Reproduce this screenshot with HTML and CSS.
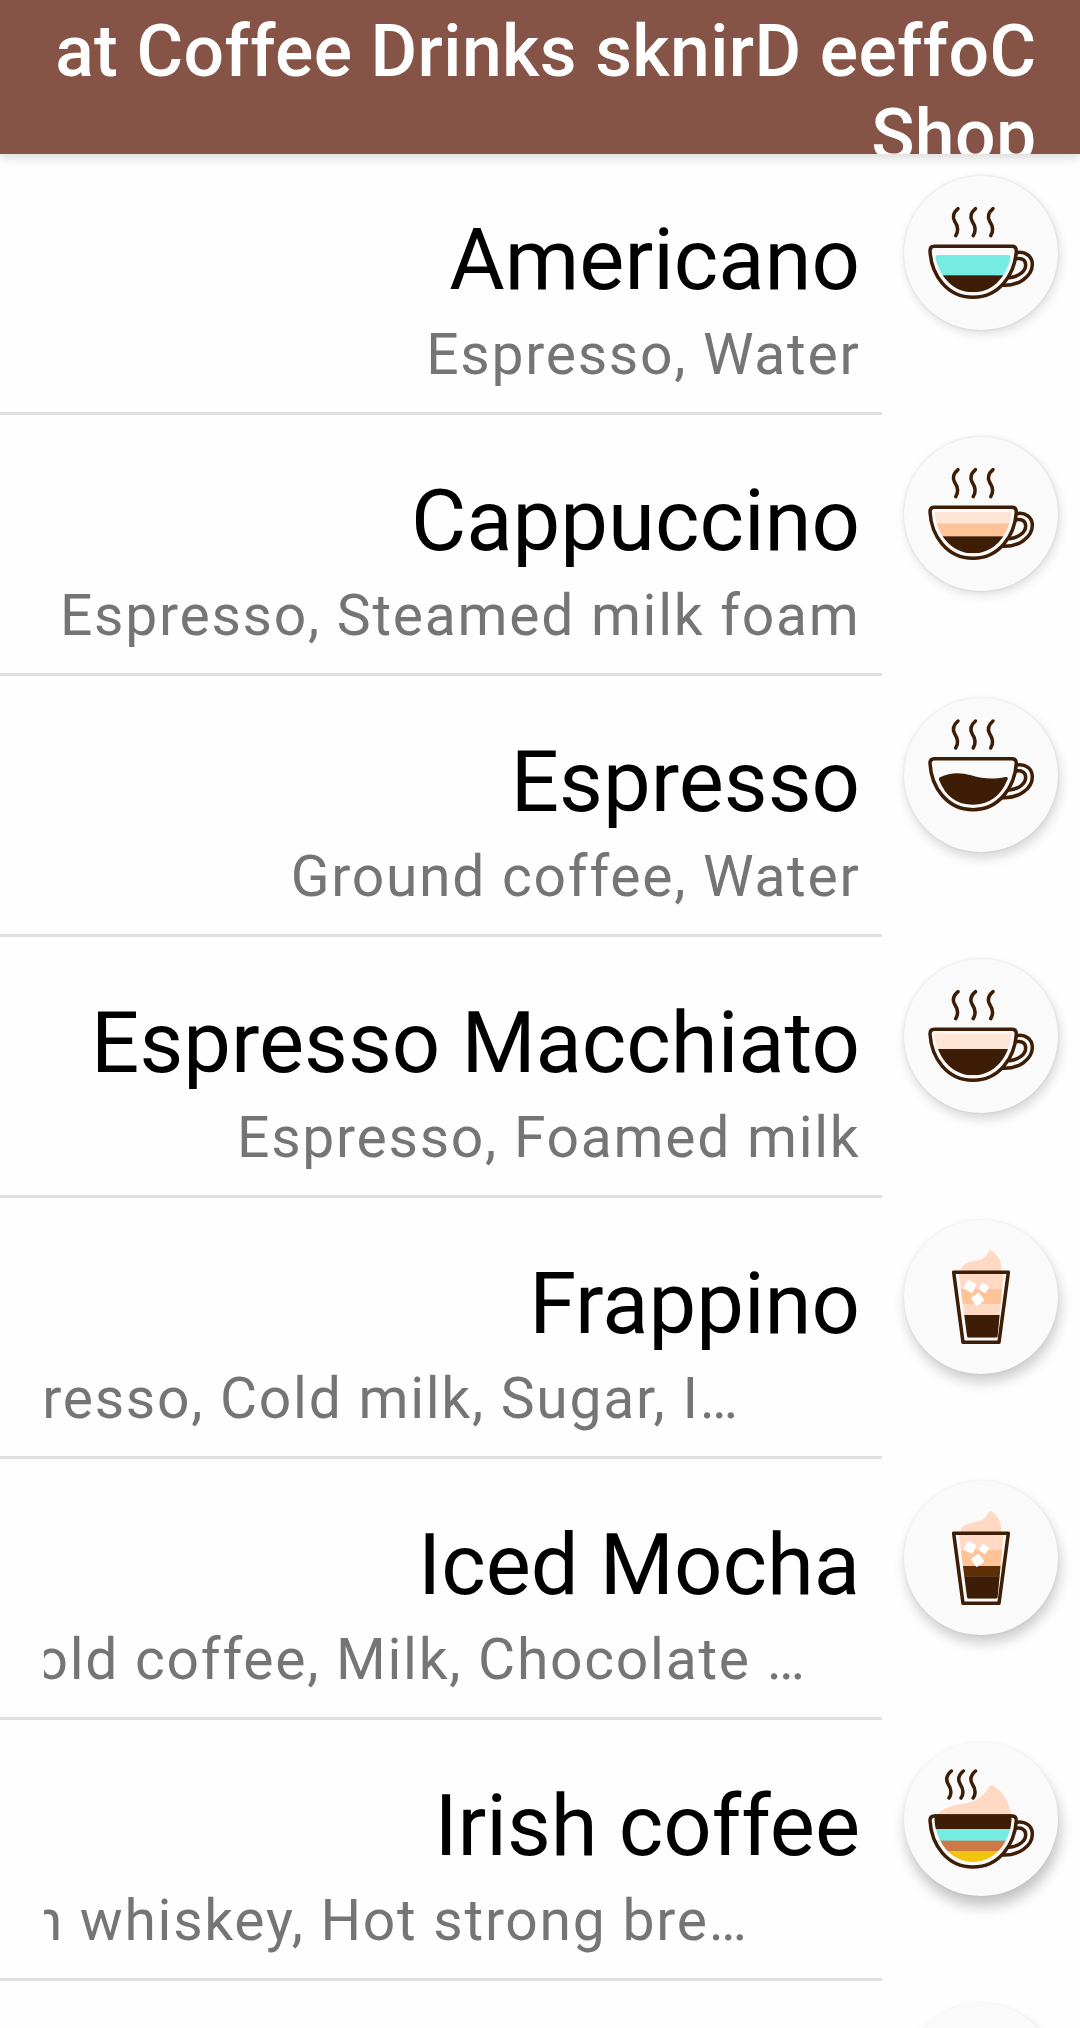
FILE: index.html
```html
<!DOCTYPE html>
<html lang="en">
<head>
<meta charset="utf-8">
<title>Coffee Drinks</title>
<link rel="stylesheet" href="styles.css">
</head>
<body>
<svg class="defs" width="0" height="0" aria-hidden="true">
  <defs>
    <path id="wisp" class="line" d="M204 146C190 158 186 170 194 184C204 199 207 212 197 227"/>
    <g id="steam"><use href="#wisp"/><use href="#wisp" x="52.5"/><use href="#wisp" x="105"/></g>
    <g id="cup" class="line">
      <path d="M133 259H366Q379 259 379 273C374 345 327 412 249 412C171 412 124 345 120 273Q120 259 133 259Z"/>
      <path d="M380 278C405 273 427 288 427 313C427 350 385 378 338 376"/>
      <path d="M378 296C395 293 407 300 407 315C407 335 385 350 358 353"/>
    </g>
    <clipPath id="bowl"><path d="M133 250H365V272C359 335 318 397 249 397C180 397 139 335 133 272Z"/></clipPath>
    <path id="glass" class="line" d="M191 217H355L327 427H219Z"/>
    <clipPath id="tumbler"><path d="M206 217H341L323 408Q323 413 318 413H236Q231 413 231 408Z"/></clipPath>
    <path id="cream" class="cream" d="M211 213C213 190 240 186 260 182C285 178 290 165 297 153Q301 148 306 152C330 170 336 190 333 213Z"/>
    <g id="ice" class="ice">
      <rect x="-15" y="-15" width="30" height="30" rx="3" transform="translate(240 259) rotate(27)"/>
      <rect x="-12" y="-12" width="24" height="24" rx="3" transform="translate(282 264) rotate(35)"/>
      <rect x="-15" y="-15" width="30" height="30" rx="3" transform="translate(263 298) rotate(-36)"/>
    </g>
  </defs>
</svg>
<div class="screen">
  <header class="app-bar"><h1>at Coffee Drinks sknirD eeffoC<br>Shop</h1></header>
  <ul class="list">
    <li class="row">
      <div class="text"><h2>Americano</h2><p><span>Espresso, Water</span></p></div>
      <div class="avatar"><svg viewBox="42 48 462 462">
        <use href="#steam"/>
        <g clip-path="url(#bowl)"><rect class="water" x="136" y="285" width="226" height="70" rx="8"/><rect class="coffee" x="120" y="346" width="260" height="60"/></g>
        <use href="#cup"/>
      </svg></div>
    </li>
    <li class="row">
      <div class="text"><h2>Cappuccino</h2><p><span>Espresso, Steamed milk foam</span></p></div>
      <div class="avatar"><svg viewBox="42 48 462 462">
        <use href="#steam"/>
        <g clip-path="url(#bowl)"><rect class="foam" x="120" y="273" width="260" height="35"/><rect class="milk" x="120" y="307" width="260" height="40"/><rect class="coffee" x="120" y="346" width="260" height="60"/></g>
        <use href="#cup"/>
      </svg></div>
    </li>
    <li class="row">
      <div class="text"><h2>Espresso</h2><p><span>Ground coffee, Water</span></p></div>
      <div class="avatar"><svg viewBox="42 77 462 462">
        <use href="#steam"/>
        <path class="coffee" d="M150 315C180 300 212 300 243 309C280 320 310 322 346 314Q355 313 353 321C332 372 298 397 249 397C200 397 168 373 147 323Q145 317 150 315Z"/>
        <use href="#cup"/>
      </svg></div>
    </li>
    <li class="row">
      <div class="text"><h2>Espresso Macchiato</h2><p><span>Espresso, Foamed milk</span></p></div>
      <div class="avatar"><svg viewBox="42 48 462 462">
        <use href="#steam"/>
        <g clip-path="url(#bowl)"><rect class="foam" x="120" y="272" width="260" height="47"/><rect class="coffee" x="120" y="318" width="260" height="88"/></g>
        <use href="#cup"/>
      </svg></div>
    </li>
    <li class="row">
      <div class="text"><h2>Frappino</h2><p class="scrolled-far"><span>resso, Cold milk, Sugar, I…</span></p></div>
      <div class="avatar"><svg viewBox="42 60 462 462">
        <use href="#cream"/>
        <g clip-path="url(#tumbler)"><rect class="cream" x="200" y="217" width="150" height="130"/><rect class="milk" x="200" y="267" width="150" height="45"/><rect class="coffee" x="200" y="345" width="150" height="70"/></g>
        <use href="#ice"/><use href="#glass"/>
      </svg></div>
    </li>
    <li class="row">
      <div class="text"><h2>Iced Mocha</h2><p class="scrolled-near"><span>old coffee, Milk, Chocolate …</span></p></div>
      <div class="avatar"><svg viewBox="42 60 462 462">
        <use href="#cream"/>
        <g clip-path="url(#tumbler)"><rect class="cream" x="200" y="217" width="150" height="51"/><rect class="milk" x="200" y="267" width="150" height="49"/><rect class="chocolate" x="200" y="315" width="150" height="32"/><rect class="coffee" x="200" y="346" width="150" height="70"/></g>
        <use href="#ice"/><use href="#glass"/>
      </svg></div>
    </li>
    <li class="row">
      <div class="text"><h2>Irish coffee</h2><p class="scrolled-mid"><span>n whiskey, Hot strong bre…</span></p></div>
      <div class="avatar"><svg viewBox="42 37 462 462">
        <g transform="translate(0 -22)"><use href="#wisp" x="-20"/><use href="#wisp" x="16"/><use href="#wisp" x="52.5"/></g>
        <path class="cream" d="M143 254C165 228 200 227 235 219C270 211 285 191 298 171Q304 163 313 170C340 186 360 226 363 256Z"/>
        <g clip-path="url(#bowl)"><rect class="coffee" x="120" y="254" width="260" height="45"/><rect class="water" x="120" y="298" width="260" height="36"/><rect class="whiskey" x="120" y="333" width="260" height="31"/><rect class="sugar" x="120" y="364" width="260" height="40"/></g>
        <use href="#cup"/>
      </svg></div>
    </li>
    <li class="row">
      <div class="text"></div>
      <div class="avatar"></div>
    </li>
  </ul>
</div>
</body>
</html>
```
FILE: styles.css
```css
* { box-sizing: border-box; }
html, body { margin: 0; }
body { background: #fefefe; font-family: Roboto, "Liberation Sans", sans-serif; }
.defs { display: block; }
.screen { display: flex; flex-direction: column; width: 1080px; height: 2028px; overflow: hidden; }
.app-bar {
  flex: none; height: 154px; padding: 10px 43.5px 0; overflow: hidden;
  background: #855446; color: #fff; text-align: right;
  box-shadow: 0 3px 11px rgba(0, 0, 0, .16);
}
h1 { margin: 0; font-size: 71.5px; font-weight: 500; line-height: 83.5px; letter-spacing: .4px; white-space: nowrap; }
.list { margin: 0; padding: 0; list-style: none; }
.row { display: flex; height: 261px; }
.text {
  width: 882px; padding: 56px 22px 0 44px;
  border-bottom: 3px solid #e0e0e0; text-align: right;
}
h2 { margin: 0; color: #000; font-size: 85px; font-weight: 400; line-height: 100px; white-space: nowrap; }
p {
  display: flex; justify-content: flex-end; margin: 11px -.5px 0 0; overflow: hidden;
  color: #757575; font-size: 57px; line-height: 67px; letter-spacing: 1.73px; white-space: nowrap;
}
.scrolled-far { padding-right: 121px; }
.scrolled-mid { padding-right: 112px; }
.scrolled-near { padding-right: 54px; }
.avatar {
  width: 154px; height: 154px; margin: 22px; border-radius: 50%; background: #fafafa;
  box-shadow: 0 0 3px rgba(0, 0, 0, .12), 2px 4px 11px rgba(0, 0, 0, .13);
}
.row:nth-child(n+3) .avatar { box-shadow: 0 0 3px rgba(0, 0, 0, .1), 2px 6px 12px rgba(0, 0, 0, .16); }
.row:nth-child(n+5) .avatar { box-shadow: 0 0 3px rgba(0, 0, 0, .07), 2px 8px 13px rgba(0, 0, 0, .2); }
.row:nth-child(n+7) .avatar { box-shadow: 0 0 3px rgba(0, 0, 0, .05), 2px 10px 14px rgba(0, 0, 0, .24); }
.avatar svg { display: block; width: 154px; height: 154px; }
.line { fill: none; stroke: #3d1d05; stroke-width: 10.5; stroke-linecap: round; stroke-linejoin: round; }
.coffee { fill: #3d1d05; }
.chocolate { fill: #5d2f07; }
.water { fill: #75ebe1; }
.foam { fill: #ffe5d5; }
.milk { fill: #ffc397; }
.cream { fill: #ffd9c3; }
.whiskey { fill: #cd7945; }
.sugar { fill: #f1c40f; }
.ice { fill: #fff; }
```
